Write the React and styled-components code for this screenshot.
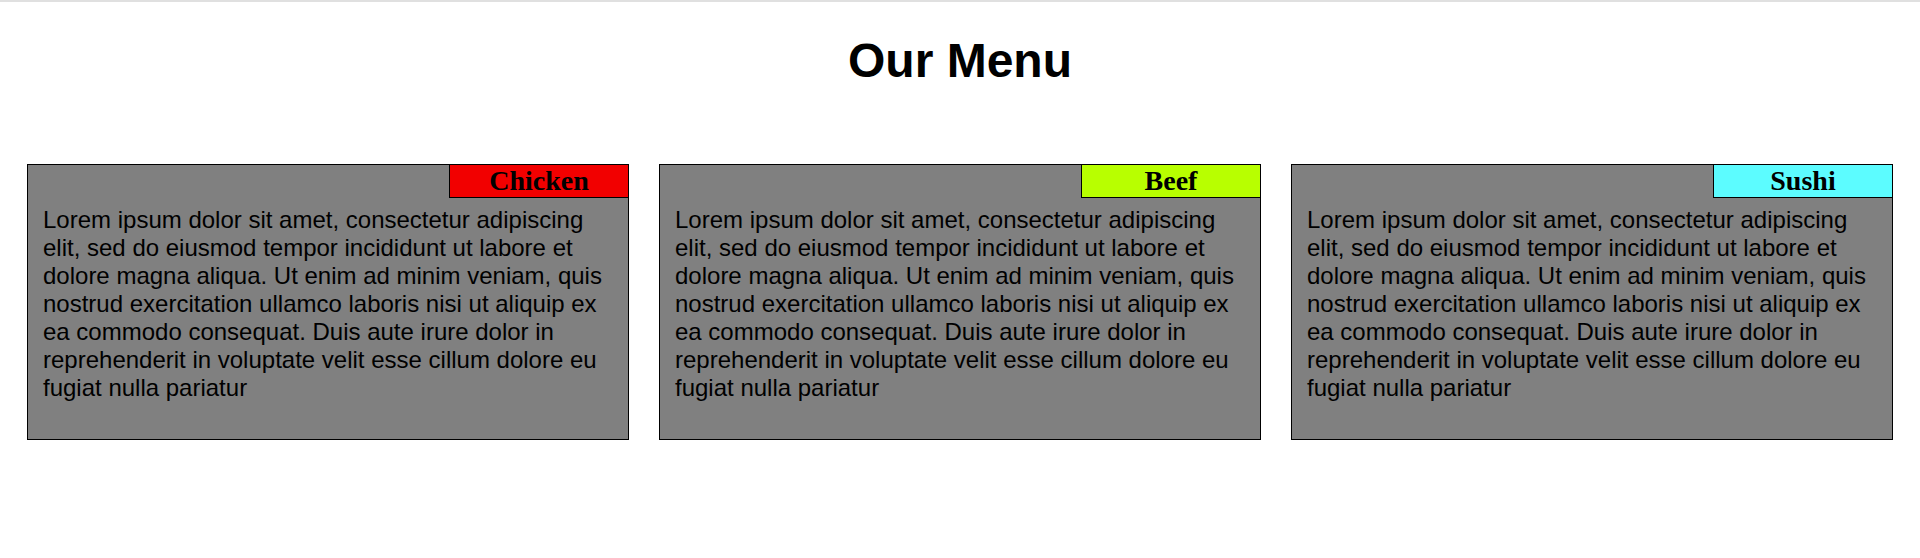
import React from "react";
import styled, { createGlobalStyle } from "styled-components";

const GlobalStyle = createGlobalStyle`
  html, body {
    margin: 0;
    padding: 0;
    background: #fff;
  }
  body {
    font-family: "Liberation Sans", Arial, sans-serif;
    border-top: 2px solid #e0e0e0;
  }
`;

const Page = styled.main`
  padding: 31px 8px 0;
`;

const Title = styled.h1`
  margin: 0 0 76px;
  text-align: center;
  font-size: 48px;
  font-weight: bold;
  color: #000;
`;

const CardRow = styled.section`
  display: flex;
  justify-content: center;
  gap: 30px;
`;

const Card = styled.article`
  position: relative;
  box-sizing: border-box;
  width: 602px;
  height: 276px;
  padding: 41px 15px 0;
  background: #808080;
  border: 1px solid #000;
`;

const Badge = styled.span`
  position: absolute;
  top: -1px;
  right: -1px;
  box-sizing: border-box;
  width: 180px;
  border: 1px solid #000;
  background: ${({ $color }) => $color};
  font-family: "Liberation Serif", "Times New Roman", serif;
  font-weight: bold;
  font-size: 28px;
  text-align: center;
  color: #000;
`;

const Description = styled.p`
  margin: 0;
  font-size: 24px;
  color: #000;
`;

const lorem =
  "Lorem ipsum dolor sit amet, consectetur adipiscing elit, sed do eiusmod tempor incididunt ut labore et dolore magna aliqua. Ut enim ad minim veniam, quis nostrud exercitation ullamco laboris nisi ut aliquip ex ea commodo consequat. Duis aute irure dolor in reprehenderit in voluptate velit esse cillum dolore eu fugiat nulla pariatur";

const items = [
  { name: "Chicken", color: "#f20000" },
  { name: "Beef", color: "#b8ff00" },
  { name: "Sushi", color: "#5cfcff" },
];

export default function App() {
  return (
    <>
      <GlobalStyle />
      <Page>
        <Title>Our Menu</Title>
        <CardRow>
          {items.map((item) => (
            <Card key={item.name}>
              <Badge $color={item.color}>{item.name}</Badge>
              <Description>{lorem}</Description>
            </Card>
          ))}
        </CardRow>
      </Page>
    </>
  );
}
